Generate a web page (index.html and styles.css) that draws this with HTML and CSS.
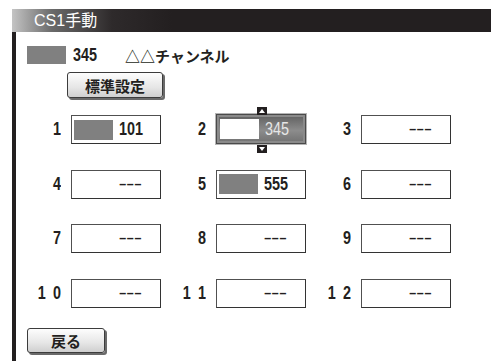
FILE: index.html
```html
<!DOCTYPE html>
<html lang="ja">
<head>
    <meta charset="UTF-8">
    <meta name="viewport" content="width=device-width, initial-scale=1.0">
    <title>CS1手動</title>
    <link rel="stylesheet" href="styles.css">
</head>
<body>
    <!-- Title bar -->
    <div class="titlebar">CS1手動</div>

    <div class="panel">
        <!-- Current channel -->
        <div class="current">
            <span class="swatch"></span>
            <span class="num">345</span>
            <span class="name">△△チャンネル</span>
        </div>

        <button class="btn btn-default">標準設定</button>

        <!-- Preset grid -->
        <div class="presets">
            <div class="cell"><span class="label">1</span><div class="box"><span class="swatch small"></span><span class="val">101</span></div></div>
            <div class="cell"><span class="label">2</span>
                <div class="box selected">
                    <span class="arrow up"></span>
                    <span class="swatch small white"></span><span class="val">345</span>
                    <span class="arrow down"></span>
                </div>
            </div>
            <div class="cell"><span class="label">3</span><div class="box"><span class="val empty">---</span></div></div>
            <div class="cell"><span class="label">4</span><div class="box"><span class="val empty">---</span></div></div>
            <div class="cell"><span class="label">5</span><div class="box"><span class="swatch small"></span><span class="val">555</span></div></div>
            <div class="cell"><span class="label">6</span><div class="box"><span class="val empty">---</span></div></div>
            <div class="cell"><span class="label">7</span><div class="box"><span class="val empty">---</span></div></div>
            <div class="cell"><span class="label">8</span><div class="box"><span class="val empty">---</span></div></div>
            <div class="cell"><span class="label">9</span><div class="box"><span class="val empty">---</span></div></div>
            <div class="cell"><span class="label">1 0</span><div class="box"><span class="val empty">---</span></div></div>
            <div class="cell"><span class="label">1 1</span><div class="box"><span class="val empty">---</span></div></div>
            <div class="cell"><span class="label">1 2</span><div class="box"><span class="val empty">---</span></div></div>
        </div>

        <button class="btn btn-back">戻る</button>
    </div>
</body>
</html>
```

FILE: styles.css
```css
html, body {
    margin: 0;
    padding: 0;
    background-color: #fff;
    overflow: hidden;
}
body {
    color: #231f20;
    font-family: "Noto Sans CJK JP", "Liberation Sans", sans-serif;
}
.titlebar {
    margin: 9px 0 0 12px;
    height: 23px;
    padding-left: 22px;
    line-height: 23px;
    font-family: "Liberation Sans", "Noto Sans CJK JP", sans-serif;
    font-size: 16px;
    color: #fff;
    background: linear-gradient(to right, #c4c4c4 0px, #6a6a6a 40px, #2e2a2b 100px, #231f20 160px);
}
.panel {
    margin-left: 12px;
    width: 466px;
    height: 340px;
    padding: 14px 0 0 11px;
    border-left: 4px solid #231f20;
    border-right: 2px solid #3a3a3a;
    border-top-right-radius: 3px;
}
.current {
    display: flex;
    align-items: center;
    height: 18px;
}
.swatch {
    display: inline-block;
    flex-shrink: 0;
    width: 39px;
    height: 18px;
    background-color: #808080;
}
/* digits are drawn narrow, like the TV font */
.num, .label, .val {
    display: inline-block;
    font-family: "Liberation Sans", sans-serif;
    font-weight: bold;
    font-size: 18px;
    transform: scaleX(0.8);
}
.current .num {
    margin-left: 7px;
    transform-origin: left center;
}
.current .name {
    margin-left: 22px;
    font-size: 15px;
    font-weight: bold;
}
.btn {
    display: block;
    padding: 0;
    font-family: "Noto Sans CJK JP", sans-serif;
    font-size: 15px;
    font-weight: bold;
    color: #231f20;
    background: linear-gradient(to bottom, #fdfdfd, #e6e6e6 60%, #cfcfcf);
    border: 1px solid #3c3c3c;
    border-radius: 3px;
    box-shadow: 2px 2px 0 #6a6a6a;
}
.btn-default {
    margin: 8px 0 0 40px;
    width: 96px;
    height: 26px;
}
.presets {
    display: grid;
    grid-template-columns: repeat(3, 134px);
    grid-auto-rows: 29px;
    column-gap: 11px;
    row-gap: 25.7px;
    margin-top: 17px;
}
.cell {
    display: flex;
    align-items: center;
}
.label {
    width: 34px;
    margin-right: 10px;
    text-align: right;
    white-space: pre;
    word-spacing: 4px;
    transform-origin: right center;
}
.box {
    position: relative;
    box-sizing: border-box;
    display: flex;
    align-items: center;
    width: 90px;
    height: 29px;
    padding: 0 19px 0 2px;
    border: 1px solid #505050;
    border-right-color: #333;
    border-bottom-color: #333;
    background-color: #fff;
}
.box .val {
    margin-left: auto;
    transform-origin: right center;
}
.box .val.empty {
    font-weight: normal;
    letter-spacing: -0.6px;
    transform: scaleX(1.4);
}
.swatch.small {
    width: 39px;
    height: 20px;
}
.box.selected {
    width: 92px;
    height: 32px;
    margin: -2px -1px -1px -1px;
    padding: 0 20px 0 4px;
    border: 1px solid #b4b4b4;
    background: linear-gradient(to bottom, #5c5c5c, #8c8c8c 55%, #6e6e6e);
    box-shadow: inset 0 0 0 1px #4a4a4a, inset 0 0 0 3px #8a8a8a;
}
.box.selected .val {
    color: #e6e6e6;
    font-weight: normal;
}
.swatch.white {
    background-color: #fff;
}
.arrow {
    position: absolute;
    left: 41px;
    width: 10px;
    height: 8px;
    background-color: #231f20;
}
.arrow.up {
    top: -7px;
}
.arrow.down {
    bottom: -9px;
}
.arrow::after {
    content: "";
    position: absolute;
    left: 2px;
    border-left: 3px solid transparent;
    border-right: 3px solid transparent;
}
.arrow.up::after {
    top: 2px;
    border-bottom: 4px solid #fff;
}
.arrow.down::after {
    top: 2px;
    border-top: 4px solid #fff;
}
.btn-back {
    margin-top: 20px;
    width: 78px;
    height: 25px;
}
```
